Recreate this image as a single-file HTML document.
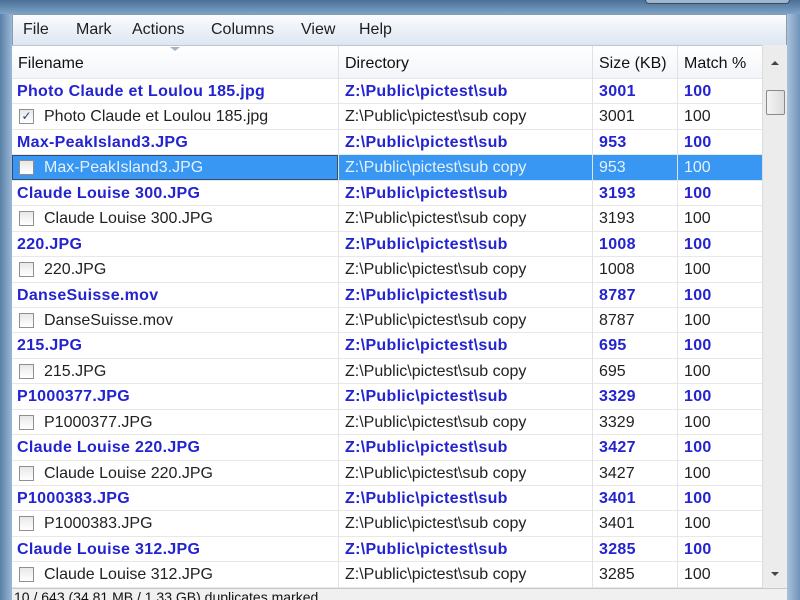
<!DOCTYPE html>
<html><head><style>
*{margin:0;padding:0;box-sizing:border-box}
body{width:800px;height:600px;overflow:hidden;background:#6f93b8;font-family:"Liberation Sans",sans-serif;position:relative}
.title{position:absolute;left:0;top:0;width:800px;height:14px;background:linear-gradient(#4a6f96,#7ea3c8)}
.tb{position:absolute;left:645px;top:0;width:145px;height:4px;background:#9fb6cf;border:1px solid #3c4b5c;border-top:none;border-radius:0 0 4px 4px}
.lf{position:absolute;left:0;top:14px;width:12px;height:586px;background:linear-gradient(90deg,#5a7fa6,#9ab8d6)}
.rf{position:absolute;left:787px;top:14px;width:13px;height:586px;background:linear-gradient(90deg,#a9c2dc,#6f93b8)}
.menu{position:absolute;left:12px;top:14px;width:775px;height:31px;background:linear-gradient(#fbfcfe,#dde6f2);border:1px solid #8b9bb0;border-bottom:none;font-size:16px;color:#1e1e1e}
.menu span{position:absolute;top:6px}
.hdr{position:absolute;left:12px;top:45px;width:750px;height:34px;background:linear-gradient(#fff,#f2f5f9);border-top:1px solid #bcc7d4;border-bottom:1px solid #e2e6ea;font-size:16px;color:#111}
.hdr span{position:absolute;top:9px}
.hdr .sep{position:absolute;top:0;width:1px;height:33px;background:#dde2e8}
.tbl{position:absolute;left:12px;top:79px;width:750px;height:509px;background:#fff}
.row{position:relative;width:750px;height:25.45px;background:#fff;border-bottom:1px solid #e8e8e8;font-size:16px}
.row span{position:absolute;top:4px;white-space:nowrap}
.row i{position:absolute;top:0;width:1px;height:26px;background:#e3e3e3}
.row i.a{left:326px}.row i.c{left:580px}.row i.d{left:665px}
.b{color:#2323d0;font-weight:bold;letter-spacing:0.3px}
.n{color:#222}
.f{left:5px}.fc{left:32px}.dd{left:333px}.s{left:587px}.m{left:672px}
.cb{position:absolute;left:7px;top:5px;width:15px;height:15px;border:1px solid #8f8f8f;background:linear-gradient(#e8e8e8,#fff);font-size:12px;color:#2a3f7a;text-align:center;line-height:13px}
.sel{background:#3797f2}
.sel .n{color:#e6f1fc}
.sel .fn{position:absolute;left:0;top:0;width:326px;height:25px;border:1px solid #3a4a6a}
.sb{position:absolute;left:762px;top:45px;width:25px;height:543px;background:#ececec;border-left:1px solid #ddd}
.thumb{position:absolute;left:3px;top:45px;width:19px;height:25px;border:1px solid #8a8a8a;border-radius:2px;background:linear-gradient(90deg,#f4f4f4,#dcdcdc)}
.status{position:absolute;left:12px;top:588px;width:775px;height:12px;background:#f0f0f0;border-top:1px solid #c8c8c8;font-size:14px;color:#111;overflow:hidden;padding-left:2px}
</style></head><body>
<div class="title"></div><div class="tb"></div>
<div class="lf"></div><div class="rf"></div>
<div class="menu"><span style="left:10px">File</span><span style="left:63px">Mark</span><span style="left:119px">Actions</span><span style="left:198px">Columns</span><span style="left:288px">View</span><span style="left:346px">Help</span></div>
<div class="hdr"><span style="left:6px">Filename</span><span style="left:333px">Directory</span><span style="left:587px">Size (KB)</span><span style="left:672px">Match %</span>
<div class="sep" style="left:326px"></div><div class="sep" style="left:580px"></div><div class="sep" style="left:665px"></div>
<div style="position:absolute;left:158px;top:1px;width:0;height:0;border-left:5px solid transparent;border-right:5px solid transparent;border-top:4px solid #9fb4c8"></div></div>
<div class="sb"><div style="position:absolute;left:8px;top:16px;border-left:4px solid transparent;border-right:4px solid transparent;border-bottom:4px solid #444"></div><div class="thumb"></div><div style="position:absolute;left:8px;top:527px;border-left:4px solid transparent;border-right:4px solid transparent;border-top:4px solid #444"></div></div>
<div class="tbl">
<div class="row"><i class="a"></i><i class="c"></i><i class="d"></i><span class="b f">Photo Claude et Loulou 185.jpg</span><span class="b dd">Z:\Public\pictest\sub</span><span class="b s">3001</span><span class="b m">100</span></div>
<div class="row"><i class="a"></i><i class="c"></i><i class="d"></i><div class="cb">✓</div><span class="n fc">Photo Claude et Loulou 185.jpg</span><span class="n dd">Z:\Public\pictest\sub copy</span><span class="n s">3001</span><span class="n m">100</span></div>
<div class="row"><i class="a"></i><i class="c"></i><i class="d"></i><span class="b f">Max-PeakIsland3.JPG</span><span class="b dd">Z:\Public\pictest\sub</span><span class="b s">953</span><span class="b m">100</span></div>
<div class="row sel"><i class="a"></i><i class="c"></i><i class="d"></i><div class="fn"></div><div class="cb"></div><span class="n fc">Max-PeakIsland3.JPG</span><span class="n dd">Z:\Public\pictest\sub copy</span><span class="n s">953</span><span class="n m">100</span></div>
<div class="row"><i class="a"></i><i class="c"></i><i class="d"></i><span class="b f">Claude Louise 300.JPG</span><span class="b dd">Z:\Public\pictest\sub</span><span class="b s">3193</span><span class="b m">100</span></div>
<div class="row"><i class="a"></i><i class="c"></i><i class="d"></i><div class="cb"></div><span class="n fc">Claude Louise 300.JPG</span><span class="n dd">Z:\Public\pictest\sub copy</span><span class="n s">3193</span><span class="n m">100</span></div>
<div class="row"><i class="a"></i><i class="c"></i><i class="d"></i><span class="b f">220.JPG</span><span class="b dd">Z:\Public\pictest\sub</span><span class="b s">1008</span><span class="b m">100</span></div>
<div class="row"><i class="a"></i><i class="c"></i><i class="d"></i><div class="cb"></div><span class="n fc">220.JPG</span><span class="n dd">Z:\Public\pictest\sub copy</span><span class="n s">1008</span><span class="n m">100</span></div>
<div class="row"><i class="a"></i><i class="c"></i><i class="d"></i><span class="b f">DanseSuisse.mov</span><span class="b dd">Z:\Public\pictest\sub</span><span class="b s">8787</span><span class="b m">100</span></div>
<div class="row"><i class="a"></i><i class="c"></i><i class="d"></i><div class="cb"></div><span class="n fc">DanseSuisse.mov</span><span class="n dd">Z:\Public\pictest\sub copy</span><span class="n s">8787</span><span class="n m">100</span></div>
<div class="row"><i class="a"></i><i class="c"></i><i class="d"></i><span class="b f">215.JPG</span><span class="b dd">Z:\Public\pictest\sub</span><span class="b s">695</span><span class="b m">100</span></div>
<div class="row"><i class="a"></i><i class="c"></i><i class="d"></i><div class="cb"></div><span class="n fc">215.JPG</span><span class="n dd">Z:\Public\pictest\sub copy</span><span class="n s">695</span><span class="n m">100</span></div>
<div class="row"><i class="a"></i><i class="c"></i><i class="d"></i><span class="b f">P1000377.JPG</span><span class="b dd">Z:\Public\pictest\sub</span><span class="b s">3329</span><span class="b m">100</span></div>
<div class="row"><i class="a"></i><i class="c"></i><i class="d"></i><div class="cb"></div><span class="n fc">P1000377.JPG</span><span class="n dd">Z:\Public\pictest\sub copy</span><span class="n s">3329</span><span class="n m">100</span></div>
<div class="row"><i class="a"></i><i class="c"></i><i class="d"></i><span class="b f">Claude Louise 220.JPG</span><span class="b dd">Z:\Public\pictest\sub</span><span class="b s">3427</span><span class="b m">100</span></div>
<div class="row"><i class="a"></i><i class="c"></i><i class="d"></i><div class="cb"></div><span class="n fc">Claude Louise 220.JPG</span><span class="n dd">Z:\Public\pictest\sub copy</span><span class="n s">3427</span><span class="n m">100</span></div>
<div class="row"><i class="a"></i><i class="c"></i><i class="d"></i><span class="b f">P1000383.JPG</span><span class="b dd">Z:\Public\pictest\sub</span><span class="b s">3401</span><span class="b m">100</span></div>
<div class="row"><i class="a"></i><i class="c"></i><i class="d"></i><div class="cb"></div><span class="n fc">P1000383.JPG</span><span class="n dd">Z:\Public\pictest\sub copy</span><span class="n s">3401</span><span class="n m">100</span></div>
<div class="row"><i class="a"></i><i class="c"></i><i class="d"></i><span class="b f">Claude Louise 312.JPG</span><span class="b dd">Z:\Public\pictest\sub</span><span class="b s">3285</span><span class="b m">100</span></div>
<div class="row"><i class="a"></i><i class="c"></i><i class="d"></i><div class="cb"></div><span class="n fc">Claude Louise 312.JPG</span><span class="n dd">Z:\Public\pictest\sub copy</span><span class="n s">3285</span><span class="n m">100</span></div>
</div>
<div class="status">10 / 643 (34.81 MB / 1.33 GB) duplicates marked</div>
</body></html>
